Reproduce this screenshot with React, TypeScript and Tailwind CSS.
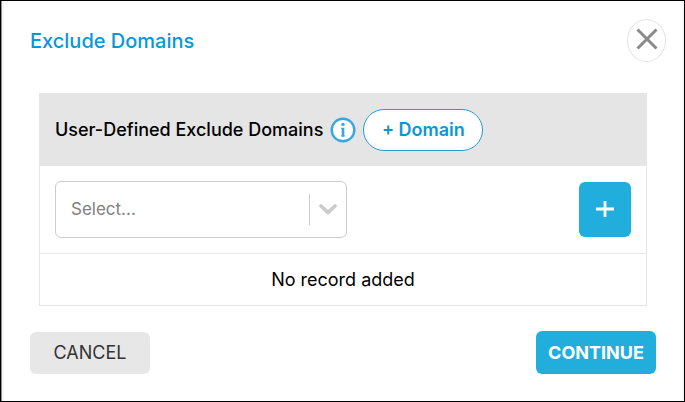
import { useState } from "react";

function CloseIcon() {
  return (
    <svg viewBox="0 0 22 22" className="h-[22px] w-[22px]" fill="none" stroke="#8a8a8a" strokeWidth="3" aria-hidden="true">
      <path d="M1.5 1.5 20.5 20.5M20.5 1.5 1.5 20.5" />
    </svg>
  );
}

function InfoIcon() {
  return (
    <svg viewBox="0 0 26 26" className="h-[26px] w-[26px]" aria-hidden="true">
      <circle cx="13" cy="13" r="11.3" fill="#fff" stroke="#35a8df" strokeWidth="2.4" />
      <circle cx="13" cy="7.4" r="1.7" fill="#35a8df" />
      <path d="M13 10.8V19.6" fill="none" stroke="#35a8df" strokeWidth="2.6" />
      <path d="M11.2 11.4H13M11.2 19H14.8" fill="none" stroke="#35a8df" strokeWidth="1.1" />
    </svg>
  );
}

function ChevronIcon() {
  return (
    <svg viewBox="0 0 18 11" className="h-[11px] w-[18px]" fill="none" stroke="#ccc" strokeWidth="3.6" strokeLinecap="round" strokeLinejoin="round" aria-hidden="true">
      <path d="M2 2 9 8.6 16 2" />
    </svg>
  );
}

function PlusIcon() {
  return (
    <svg viewBox="0 0 18 18" className="h-[18px] w-[18px]" fill="none" stroke="#fff" strokeWidth="2.8" aria-hidden="true">
      <path d="M0 9H18M9 1V17" />
    </svg>
  );
}

export default function App() {
  const [domain, setDomain] = useState("");

  return (
    <main className="flex min-h-screen flex-col border border-black bg-white font-['Inter','Liberation_Sans',sans-serif] text-black">
      <div className="flex grow flex-col border-l border-[#8c8c8c]">
        <div className="flex grow flex-col border-x-2 border-[#f8f6f7]">
          <header className="flex items-center justify-between pt-[18px] pr-4 pl-[26px]">
            <h1 className="text-xl font-medium text-[#0a97d9]">Exclude Domains</h1>
            <button
              type="button"
              aria-label="Close"
              className="flex h-[43px] w-[39px] items-start justify-center rounded-[50%] border border-[#e4e4e4] pt-2"
            >
              <CloseIcon />
            </button>
          </header>

          <div className="pt-[31px] pr-[35px] pl-[35px]">
            <table className="w-full border-collapse border border-[#e5e5e5]">
              <thead>
                <tr className="bg-[#e5e5e5]">
                  <th colSpan={2} className="h-[72px] px-[15px] font-normal">
                    <div className="flex items-center gap-[7px]">
                      <span className="text-lg font-medium whitespace-nowrap">User-Defined Exclude Domains</span>
                      <button type="button" aria-label="About exclude domains">
                        <InfoIcon />
                      </button>
                      <button
                        type="button"
                        className="h-[42px] w-[120px] rounded-full border border-[#1f9fd9] bg-white text-lg font-semibold whitespace-nowrap text-[#0a97d9]"
                      >
                        + Domain
                      </button>
                    </div>
                  </th>
                </tr>
              </thead>
              <tbody>
                <tr className="border-b border-[#e9e9e9]">
                  <td className="h-[88px] pl-[15px]">
                    <div className="flex h-[57px] w-[292px] items-center rounded-md border border-[#ccc] pr-[9px]">
                      <select
                        aria-label="Domain"
                        value={domain}
                        onChange={(e) => setDomain(e.target.value)}
                        className="h-full min-w-0 flex-1 appearance-none bg-transparent pl-[15px] text-[17px] text-[#808080] outline-none"
                      >
                        <option value="">Select...</option>
                      </select>
                      <span className="mr-[9px] h-[31px] w-px bg-[#ccc]" />
                      <ChevronIcon />
                    </div>
                  </td>
                  <td className="pr-[15px]">
                    <button
                      type="button"
                      aria-label="Add domain"
                      className="ml-auto flex h-[55px] w-[52px] items-center justify-center rounded-md bg-[#22aedc]"
                    >
                      <PlusIcon />
                    </button>
                  </td>
                </tr>
                <tr>
                  <td colSpan={2} className="h-[52px] text-center text-lg">
                    No record added
                  </td>
                </tr>
              </tbody>
            </table>
          </div>

          <footer className="flex items-center justify-between pt-[25px] pr-[26px] pb-[26px] pl-[26px]">
            <button type="button" className="h-[42px] w-[120px] rounded-md bg-[#e7e7e7] text-lg text-[#333]">
              CANCEL
            </button>
            <button type="button" className="h-[43px] w-[120px] rounded-md bg-[#22aedc] text-lg font-bold text-white">
              CONTINUE
            </button>
          </footer>
        </div>
      </div>
    </main>
  );
}
